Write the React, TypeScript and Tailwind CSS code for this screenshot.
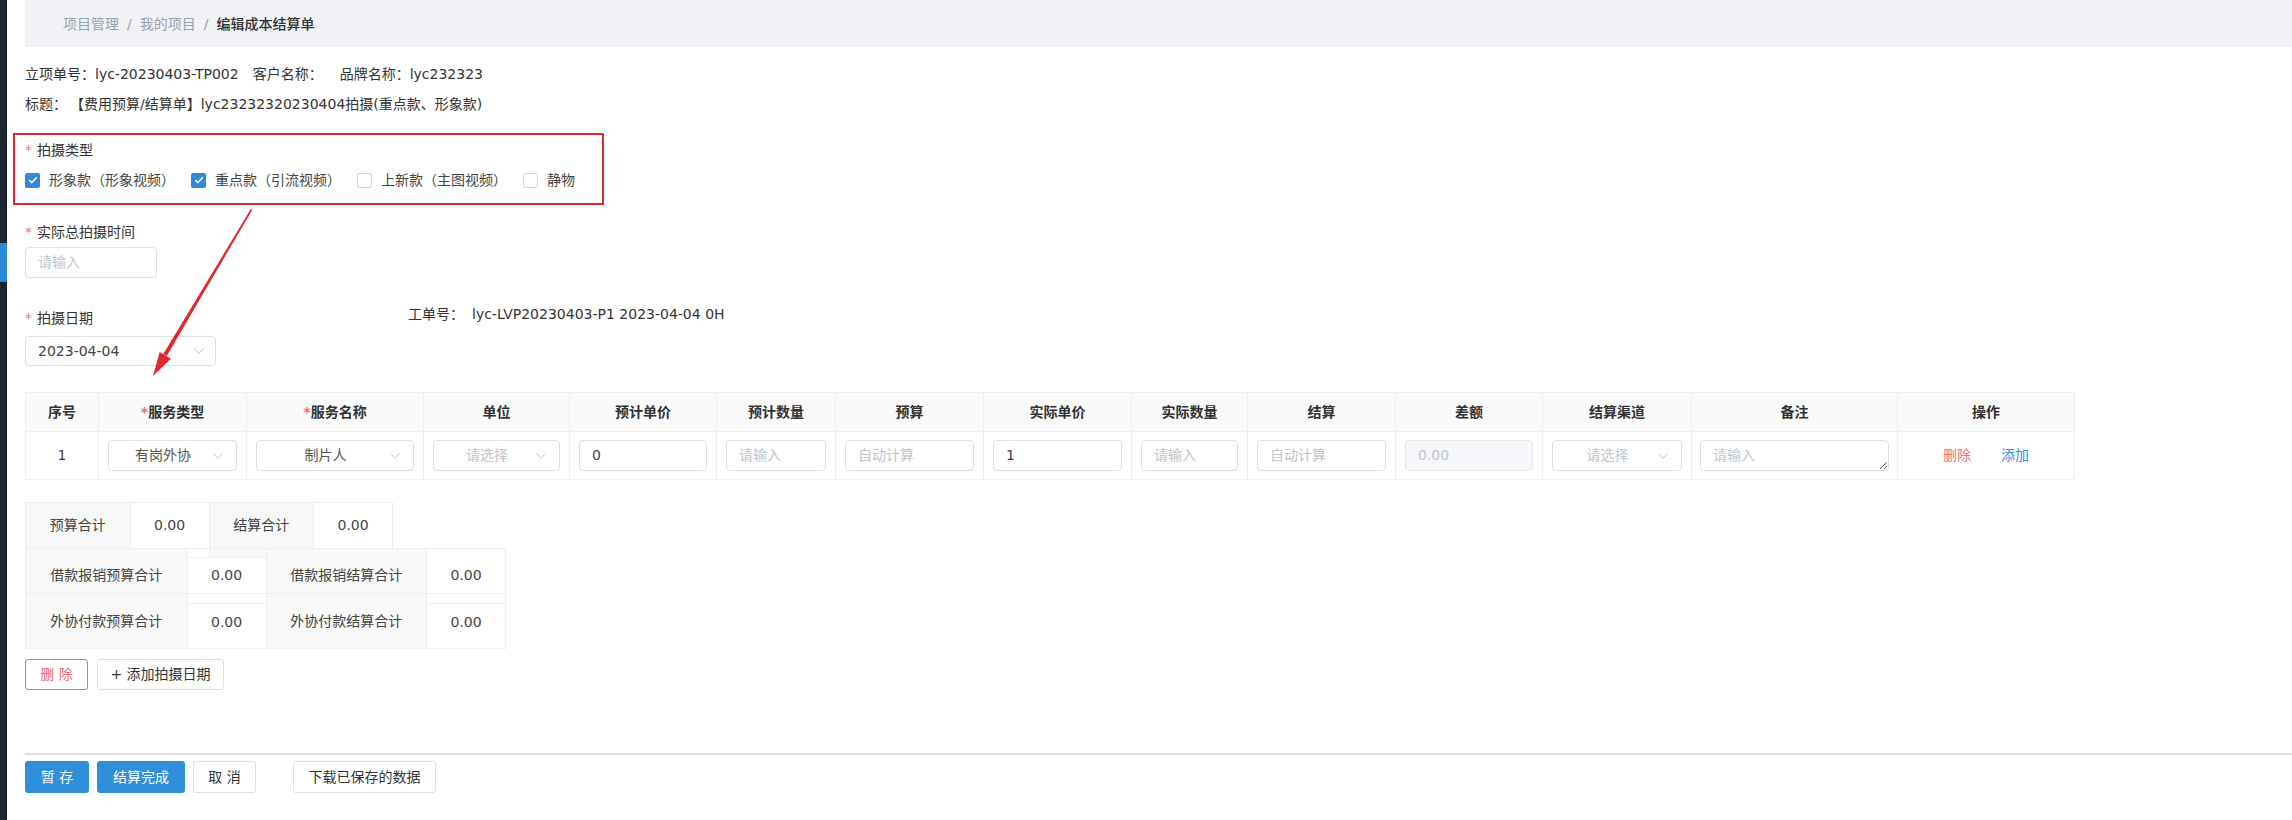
import React from "react";

const cols =
  "grid grid-cols-[73px_148px_177px_146px_147px_119px_148px_148px_116px_148px_147px_149px_206px_177px]";

const headers = [
  { t: "序号" },
  { t: "服务类型", req: true },
  { t: "服务名称", req: true },
  { t: "单位" },
  { t: "预计单价" },
  { t: "预计数量" },
  { t: "预算" },
  { t: "实际单价" },
  { t: "实际数量" },
  { t: "结算" },
  { t: "差额" },
  { t: "结算渠道" },
  { t: "备注" },
  { t: "操作" },
];

function Chevron() {
  return (
    <svg width="10" height="6" viewBox="0 0 10 6" className="ml-[6px] shrink-0">
      <polyline points="0.5,0.5 5,5.5 9.5,0.5" fill="none" stroke="#c0c4cc" strokeWidth="1" />
    </svg>
  );
}

function Select({ value, placeholder = "请选择" }: { value?: string; placeholder?: string }) {
  return (
    <div className="flex h-[31px] w-full items-center rounded-[4px] border border-[#dcdfe6] bg-white pl-[10px] pr-[13px]">
      <span className={"flex-1 text-center " + (value ? "text-[#555]" : "text-[#c0c4cc]")}>
        {value || placeholder}
      </span>
      <Chevron />
    </div>
  );
}

function Input({ value, placeholder = "请输入", disabled }: { value?: string; placeholder?: string; disabled?: boolean }) {
  return (
    <div
      className={
        "flex h-[31px] w-full items-center rounded-[4px] border px-[12px] " +
        (disabled ? "border-[#e4e7ed] bg-[#f5f7fa] text-[#c0c4cc]" : "border-[#dcdfe6] bg-white")
      }
    >
      <span className={value && !disabled ? "text-[#444]" : "text-[#c0c4cc]"}>{value || placeholder}</span>
    </div>
  );
}

function Check({ on, label }: { on?: boolean; label: string }) {
  return (
    <div className="flex items-center">
      {on ? (
        <span className="flex h-[15px] w-[15px] items-center justify-center rounded-[2px] bg-[#2f89dc]">
          <svg width="10" height="8" viewBox="0 0 10 8">
            <polyline points="1.2,4 3.8,6.5 8.8,1.2" fill="none" stroke="#fff" strokeWidth="1.6" />
          </svg>
        </span>
      ) : (
        <span className="h-[15px] w-[15px] rounded-[2px] border border-[#d4d7de] bg-white" />
      )}
      <span className="ml-[9px] text-[#444]">{label}</span>
    </div>
  );
}

function Label({ text }: { text: string }) {
  return (
    <div className="flex h-[20px] items-center leading-[20px]">
      <span className="mr-[5px] text-[#f56c6c]">*</span>
      <span className="text-[#333]">{text}</span>
    </div>
  );
}

export default function App() {
  return (
    <div className="relative flex h-[820px] w-[2292px] overflow-hidden bg-white font-['DejaVu_Sans','Noto_Sans_CJK_SC',sans-serif] text-[14px] text-[#333]">
      <aside className="flex w-[7px] shrink-0 flex-col bg-[#1c2830]">
        <div className="mt-[243px] h-[39px] bg-[#2b88d6]" />
      </aside>

      <main className="flex-1 pl-[18px]">
        <div className="flex h-[47px] items-center bg-[#f0f2f5] pl-[38px] leading-[20px]">
          <span className="text-[#97a1ae]">项目管理</span>
          <span className="mx-[8px] text-[#97a1ae]">/</span>
          <span className="text-[#97a1ae]">我的项目</span>
          <span className="mx-[8px] text-[#97a1ae]">/</span>
          <span className="font-medium text-[#303133]">编辑成本结算单</span>
        </div>

        <div className="mt-[17px] flex h-[20px] items-center text-[#333]">
          <span className="mr-[14px]">立项单号：lyc-20230403-TP002</span>
          <span className="mr-[17px]">客户名称：</span>
          <span>品牌名称：lyc232323</span>
        </div>
        <div className="mt-[10px] flex h-[20px] items-center text-[#333]">
          <span>标题：</span>
          <span className="ml-[3px]">【费用预算/结算单】lyc23232320230404拍摄(重点款、形象款)</span>
        </div>

        <div className="mt-[26px]">
          <Label text="拍摄类型" />
          <div className="mt-[10px] flex h-[20px] items-center gap-[16px]">
            <Check on label="形象款（形象视频）" />
            <Check on label="重点款（引流视频）" />
            <Check label="上新款（主图视频）" />
            <Check label="静物" />
          </div>
        </div>

        <div className="mt-[32px]">
          <Label text="实际总拍摄时间" />
          <div className="mt-[5px] w-[132px]">
            <Input />
          </div>
        </div>

        <div className="mt-[30px] flex items-start">
          <div className="w-[383px]">
            <Label text="拍摄日期" />
            <div className="mt-[8px] flex h-[30px] w-[191px] items-center rounded-[4px] border border-[#dcdfe6] pl-[12px] pr-[11px]">
              <span className="flex-1 text-[#444]">2023-04-04</span>
              <Chevron />
            </div>
          </div>
          <div className="-mt-[4px] flex h-[20px] items-center text-[#333]">
            <span className="w-[64px]">工单号：</span>
            <span>lyc-LVP20230403-P1 2023-04-04 0H</span>
          </div>
        </div>

        <div className="mt-[26px] w-[2050px] border-l border-t border-[#ebeef5]">
          <div className={cols + " h-[39px] bg-[#fafafa]"}>
            {headers.map((h) => (
              <div
                key={h.t}
                className="flex items-center justify-center border-b border-r border-[#ebeef5] font-semibold text-[#303133]"
              >
                {h.req && <span className="text-[#f56c6c]">*</span>}
                {h.t}
              </div>
            ))}
          </div>
          <div className={cols + " h-[48px]"}>
            <div className="flex items-center justify-center border-b border-r border-[#ebeef5] text-[#444]">1</div>
            <div className="flex items-center border-b border-r border-[#ebeef5] px-[9px]">
              <Select value="有岗外协" />
            </div>
            <div className="flex items-center border-b border-r border-[#ebeef5] px-[9px]">
              <Select value="制片人" />
            </div>
            <div className="flex items-center border-b border-r border-[#ebeef5] px-[9px]">
              <Select />
            </div>
            <div className="flex items-center border-b border-r border-[#ebeef5] px-[9px]">
              <Input value="0" />
            </div>
            <div className="flex items-center border-b border-r border-[#ebeef5] px-[9px]">
              <Input />
            </div>
            <div className="flex items-center border-b border-r border-[#ebeef5] px-[9px]">
              <Input placeholder="自动计算" />
            </div>
            <div className="flex items-center border-b border-r border-[#ebeef5] px-[9px]">
              <Input value="1" />
            </div>
            <div className="flex items-center border-b border-r border-[#ebeef5] px-[9px]">
              <Input />
            </div>
            <div className="flex items-center border-b border-r border-[#ebeef5] px-[9px]">
              <Input placeholder="自动计算" />
            </div>
            <div className="flex items-center border-b border-r border-[#ebeef5] px-[9px]">
              <Input placeholder="0.00" disabled />
            </div>
            <div className="flex items-center border-b border-r border-[#ebeef5] px-[9px]">
              <Select />
            </div>
            <div className="flex items-center border-b border-r border-[#ebeef5] px-[8px]">
              <textarea
                placeholder="请输入"
                className="block h-[31px] w-full resize-y rounded-[4px] border border-[#dcdfe6] px-[12px] py-[4px] text-[14px] leading-[21px] text-[#606266] placeholder:text-[#c0c4cc] focus:outline-none"
              />
            </div>
            <div className="flex items-center justify-center gap-[30px] border-b border-r border-[#ebeef5]">
              <span className="text-[#f56c6c]">删除</span>
              <span className="text-[#3a8ee6]">添加</span>
            </div>
          </div>
        </div>

        <div className="mt-[22px] flex w-[368px] border-l border-t border-[#ebeef5] text-[#444]">
          <div className="flex h-[45px] w-[105px] items-center justify-center border-r border-[#ebeef5] bg-[#f8f8f9]">预算合计</div>
          <div className="flex h-[45px] w-[79px] items-center justify-center border-r border-[#ebeef5]">0.00</div>
          <div className="flex h-[45px] w-[105px] items-center justify-center border-r border-[#ebeef5] bg-[#f8f8f9]">结算合计</div>
          <div className="flex h-[45px] w-[79px] items-center justify-center border-r border-[#ebeef5]">0.00</div>
        </div>
        <div className="w-[481px] border-l border-t border-[#ebeef5] text-[#444]">
          <div className="flex h-[45px]">
            <div className="flex w-[162px] items-center justify-center border-b border-r border-[#ebeef5] bg-[#f8f8f9] pt-[9px]">
              借款报销预算合计
            </div>
            <div className="flex w-[79px] flex-col border-b border-r border-[#ebeef5]">
              <div className="flex h-[9px] border-b border-[#ebeef5]">
                <div className="w-[22px] border-r border-[#ebeef5]" />
                <div className="flex-1 bg-[#f8f8f9]" />
              </div>
              <div className="flex flex-1 items-center justify-center">0.00</div>
            </div>
            <div className="flex w-[161px] items-center justify-center border-b border-r border-[#ebeef5] bg-[#f8f8f9] pt-[9px]">
              借款报销结算合计
            </div>
            <div className="flex w-[79px] items-center justify-center border-b border-r border-[#ebeef5] pt-[9px]">0.00</div>
          </div>
          <div className="flex h-[55px]">
            <div className="flex w-[162px] items-center justify-center border-b border-r border-[#ebeef5] bg-[#f8f8f9]">
              外协付款预算合计
            </div>
            <div className="flex w-[79px] flex-col border-b border-r border-[#ebeef5]">
              <div className="h-[10px] border-b border-[#ebeef5]" />
              <div className="flex flex-1 items-center justify-center pb-[8px]">0.00</div>
            </div>
            <div className="flex w-[161px] items-center justify-center border-b border-r border-[#ebeef5] bg-[#f8f8f9]">
              外协付款结算合计
            </div>
            <div className="flex w-[79px] flex-col border-b border-r border-[#ebeef5]">
              <div className="h-[10px] border-b border-[#ebeef5]" />
              <div className="flex flex-1 items-center justify-center pb-[8px]">0.00</div>
            </div>
          </div>
        </div>

        <div className="mt-[10px] flex gap-[9px]">
          <button className="h-[31px] w-[63px] rounded-[3px] border border-[#f56c6c] bg-white text-[#f56c6c]">删 除</button>
          <button className="h-[31px] w-[127px] rounded-[3px] border border-[#dcdfe6] bg-white text-[#333]">+ 添加拍摄日期</button>
        </div>

        <div className="mt-[63px] h-[2px] bg-[#dedede]" />

        <div className="mt-[6px] flex">
          <button className="h-[32px] w-[64px] rounded-[3px] bg-[#2f8fd9] text-white">暂 存</button>
          <button className="ml-[8px] h-[32px] w-[88px] rounded-[3px] bg-[#2f8fd9] text-white">结算完成</button>
          <button className="ml-[8px] h-[32px] w-[63px] rounded-[3px] border border-[#dcdfe6] bg-white text-[#333]">取 消</button>
          <button className="ml-[37px] h-[32px] w-[143px] rounded-[3px] border border-[#dcdfe6] bg-white text-[#333]">下载已保存的数据</button>
        </div>
      </main>

      {/* annotation overlay */}
      <div className="pointer-events-none absolute left-[13px] top-[133px] h-[72px] w-[591px] border-2 border-[#e3262a]" />
      <svg className="pointer-events-none absolute left-0 top-0" width="2292" height="820">
        <polygon points="252.2,209.9 250.8,209.1 163.3,354 166.7,356" fill="#e3262a" />
        <polygon points="153,376 170.9,358.7 165.3,355.4 159.7,352.1" fill="#e3262a" />
      </svg>
    </div>
  );
}
